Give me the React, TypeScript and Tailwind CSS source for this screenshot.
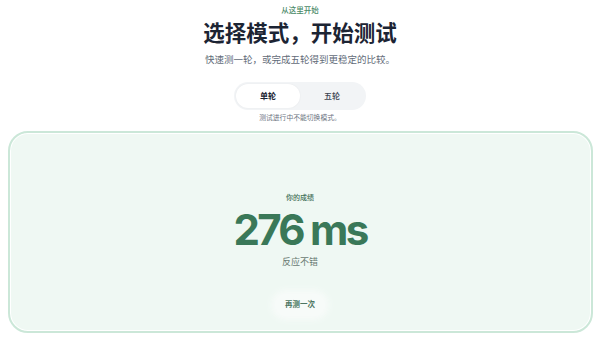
import React, { useState } from 'react';

type Mode = 'single' | 'five';

export default function App() {
  const [mode, setMode] = useState<Mode>('single');

  return (
    <div
      className="w-[600px] h-[342px] bg-white flex flex-col items-center overflow-hidden"
      style={{ fontFamily: 'Inter, "Noto Sans CJK SC", sans-serif' }}
    >
      {/* Header */}
      <div className="pt-[6px] text-[7.5px] leading-[10px] font-medium text-[#4a8a68]">从这里开始</div>
      <h1 className="mt-[3px] text-[21.5px] leading-[28px] font-bold text-[#1c2433]">选择模式，开始测试</h1>
      <p className="mt-[6px] text-[9.5px] leading-[14px] text-[#626b78]">快速测一轮，或完成五轮得到更稳定的比较。</p>

      {/* Mode toggle */}
      <div className="mt-[15px] w-[132px] h-[28px] p-[2px] rounded-full bg-[#f2f4f6] grid grid-cols-2">
        <button
          onClick={() => setMode('single')}
          className={`rounded-full text-[8px] font-bold ${
            mode === 'single' ? 'bg-white text-[#1c2433] shadow-[0_0_2px_rgba(0,0,0,0.06)]' : 'text-[#3c4350]'
          }`}
        >
          单轮
        </button>
        <button
          onClick={() => setMode('five')}
          className={`rounded-full text-[8px] font-medium ${
            mode === 'five' ? 'bg-white text-[#1c2433] font-bold' : 'text-[#3c4350]'
          }`}
        >
          五轮
        </button>
      </div>
      <p className="mt-[3px] text-[6.8px] leading-[10px] text-[#6b7380]">测试进行中不能切换模式。</p>

      {/* Result card */}
      <div className="mt-[8px] w-[585px] h-[202px] shrink-0 rounded-[20px] border-2 border-[#cbe7d8] bg-[#eff8f3] shadow-[inset_0_0_0_1px_#ffffff] flex flex-col items-center">
        <div className="mt-[60px] text-[7px] leading-[10px] font-medium text-[#3f6f56]">你的成绩</div>
        <div className="mt-[5px] text-[42px] leading-[44px] font-bold tracking-[-0.065em] text-[#3a7858]">276 ms</div>
        <div className="mt-[3px] text-[9px] leading-[13px] text-[#6a7a72]">反应不错</div>
        <button className="mt-[26px] h-[22px] px-[10px] rounded-full bg-[#f7fbf9] shadow-[0_0_6px_4px_#f7fbf9] text-[7.5px] font-semibold text-[#4d7662]">
          再测一次
        </button>
      </div>
    </div>
  );
}
